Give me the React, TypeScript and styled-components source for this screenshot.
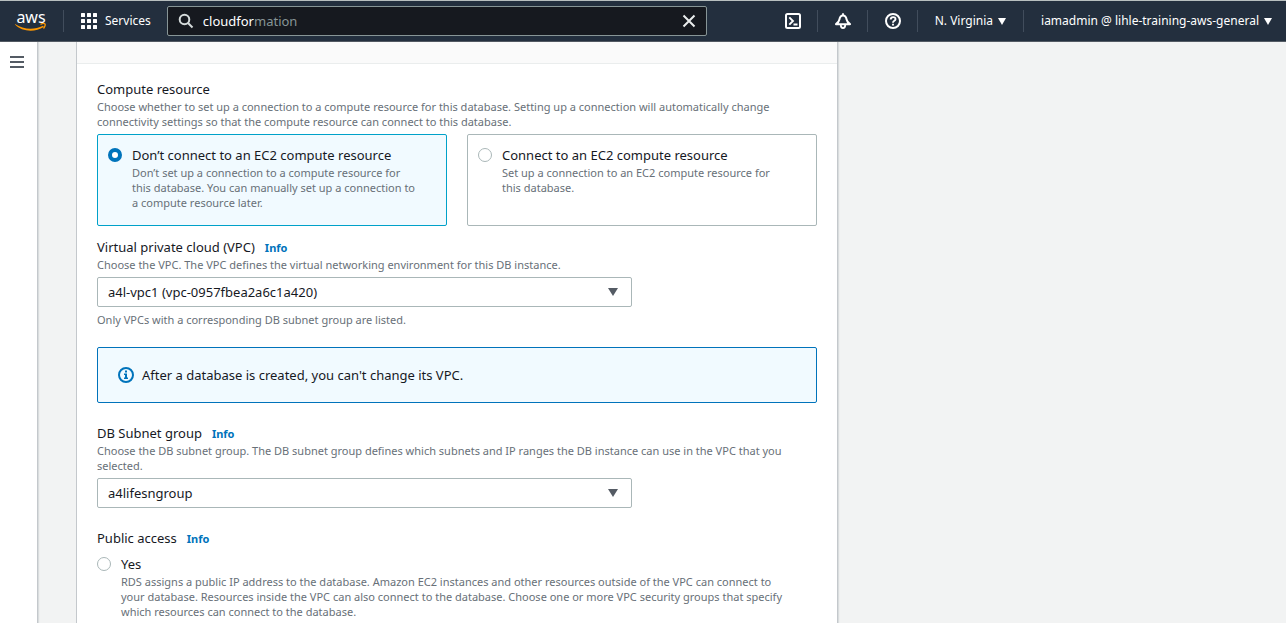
import React, { useState } from "react";
import styled, { createGlobalStyle } from "styled-components";

const GlobalStyle = createGlobalStyle`
  *, *::before, *::after { box-sizing: border-box; }
  body {
    margin: 0;
    background: #f2f3f3;
    color: #16191f;
    font-family: "Noto Sans", "Liberation Sans", sans-serif;
    font-size: 13px;
    line-height: 20px;
  }
  button, input, select { font: inherit; color: inherit; margin: 0; }
  p { margin: 0; }
`;

const Page = styled.div`
  display: flex;
  flex-direction: column;
  height: 100vh;
  overflow: hidden;
`;

const TopBar = styled.header`
  display: flex;
  align-items: center;
  flex: none;
  height: 42px;
  padding: 0 14px 0 15px;
  background: #232f3e;
  border-top: 1px solid #b8bfbf;
  border-bottom: 1px solid #545b64;
  color: #fff;
  font-size: 12px;
`;

const Logo = styled.a`
  display: flex;
  flex-direction: column;
  align-items: center;
  width: 32px;
  margin-right: 16px;
  color: #fff;
  font-size: 16px;
  line-height: 12px;
  text-decoration: none;
`;

const Divider = styled.span`
  width: 1px;
  height: 22px;
  background: #414d5c;
`;

const BarButton = styled.button`
  display: flex;
  align-items: center;
  justify-content: center;
  gap: 5px;
  padding: 0 17px;
  border: 0;
  background: none;
  white-space: nowrap;
  cursor: pointer;
`;

const ServicesButton = styled(BarButton)`
  gap: 8px;
  padding-right: 16px;
`;

const IconButton = styled(BarButton)`
  padding: 0 16px 0 17px;
`;

const AccountButton = styled(BarButton)`
  padding-right: 0;
`;

const SearchBox = styled.div`
  display: flex;
  align-items: center;
  flex: 0 1 540px;
  height: 30px;
  padding: 0 10px;
  background: #16191f;
  border: 1px solid #879596;
  border-radius: 2px;
  font-size: 13px;
`;

const SearchLabel = styled.label`
  display: flex;
  align-items: center;
  flex: 1;
`;

const SearchInput = styled.input`
  field-sizing: content;
  margin-left: 9px;
  padding: 0;
  border: 0;
  outline: 0;
  background: none;
  color: #fff;
`;

const Suggestion = styled.span`
  color: #879596;
`;

const PlainButton = styled.button`
  display: flex;
  padding: 0;
  border: 0;
  background: none;
  cursor: pointer;
`;

const BarTools = styled.div`
  display: flex;
  align-items: center;
  margin-left: auto;
`;

const Columns = styled.div`
  display: flex;
  flex: 1;
  min-height: 0;
`;

const SideRail = styled.nav`
  flex: none;
  width: 38px;
  padding: 14px 0 0 10px;
  background: #fff;
  border-right: 1px solid #c4c8cc;
  box-shadow: 1px 0 1px rgba(0, 28, 36, 0.1);
`;

const Main = styled.main`
  flex: 1;
  display: flex;
  padding-left: 38px;
`;

const Panel = styled.section`
  flex: 0 1 762px;
  background: #fff;
  border: solid #c4c8cc;
  border-width: 0 1px;
  box-shadow: 1px 0 1px rgba(0, 28, 36, 0.1);
`;

const PanelHead = styled.div`
  height: 22px;
  background: #fafafa;
  border-bottom: 1px solid #eaeded;
`;

const PanelBody = styled.form`
  display: flex;
  flex-direction: column;
  gap: 20px;
  padding: 15px 20px 0;
`;

const FieldStack = styled.div`
  display: flex;
  flex-direction: column;
  gap: 11px;
`;

const FieldTitle = styled.div`
  display: flex;
  align-items: baseline;
  gap: 10px;
`;

const InfoLink = styled.a`
  color: #0073bb;
  font-size: 11px;
  font-weight: 700;
  line-height: 15px;
  text-decoration: none;
`;

const Hint = styled.p`
  color: #687078;
  font-size: 11px;
  line-height: 15px;
`;

const Cards = styled.div`
  display: grid;
  grid-template-columns: 1fr 1fr;
  gap: 20px;
  margin-top: 5px;
`;

const Card = styled.label<{ $active: boolean }>`
  display: flex;
  gap: 10px;
  padding: 10px 28px 15px 10px;
  background: ${(p) => (p.$active ? "#f1faff" : "#fff")};
  border: 1px solid ${(p) => (p.$active ? "#00a1c9" : "#aab7b8")};
  border-radius: 2px;
`;

const RadioRow = styled.label`
  display: flex;
  gap: 10px;
  padding: 6px 28px 0 0;
`;

const Radio = styled.input`
  appearance: none;
  flex: none;
  width: 14px;
  height: 14px;
  margin-top: 3px;
  background: #fff;
  border: 1px solid #aab7b8;
  border-radius: 50%;
  &:checked {
    border: 4px solid #0073bb;
  }
`;

const SelectWrap = styled.div`
  display: flex;
  position: relative;
  width: 535px;
  max-width: 100%;
  margin-top: 5px;

  & + ${Hint} {
    margin-top: 5px;
  }
`;

const SelectBox = styled.select`
  appearance: none;
  width: 100%;
  height: 30px;
  padding: 0 30px 0 10px;
  background: #fff;
  border: 1px solid #aab7b8;
  border-radius: 2px;
`;

const SelectCaret = styled.svg`
  position: absolute;
  top: 11px;
  right: 14px;
  pointer-events: none;
`;

const Notice = styled.div`
  display: flex;
  align-items: center;
  gap: 8px;
  padding: 17px 20px;
  background: #f1faff;
  border: 1px solid #0073bb;
  border-radius: 2px;
`;

const Caret = () => (
  <svg width="8" height="7" viewBox="0 0 8 7" aria-hidden="true">
    <path d="M0 0h8L4 7z" fill="#fff" />
  </svg>
);

const iconProps = {
  width: 16,
  height: 16,
  viewBox: "0 0 16 16",
  fill: "none",
  stroke: "currentColor",
  strokeWidth: 2,
  "aria-hidden": true,
};

function Select({ id, value }: { id: string; value: string }) {
  return (
    <SelectWrap>
      <SelectBox id={id} defaultValue={value}>
        <option value={value}>{value}</option>
      </SelectBox>
      <SelectCaret width="10" height="8" viewBox="0 0 10 8" aria-hidden="true">
        <path d="M0 0h10L5 8z" fill="#545b64" />
      </SelectCaret>
    </SelectWrap>
  );
}

function Header() {
  const [query, setQuery] = useState("cloudfor");
  return (
    <TopBar>
      <Logo href="#home">
        aws
        <svg width="32" height="9" viewBox="0 0 32 9" fill="none" stroke="#ff9900" aria-hidden="true">
          <path d="M0 1c8 5.500 19 6.500 28 1.800l.8 1.200C20 9.500 7 9 0 1.500z" fill="#ff9900" stroke="none" />
          <path d="M25.500 1.300c2-.9 4-.8 4.500-.3s0 2.800-1.500 4.500" strokeWidth="1.300" />
        </svg>
      </Logo>
      <Divider />
      <ServicesButton>
        <svg width="16" height="16" viewBox="0 0 16 16" fill="#fff" aria-hidden="true">
          {[0, 6, 12].map((y) =>
            [0, 6, 12].map((x) => <rect key={`${x}-${y}`} x={x} y={y} width="4" height="4" rx="0.500" />)
          )}
        </svg>
        Services
      </ServicesButton>
      <SearchBox>
        <SearchLabel>
          <svg {...iconProps} stroke="#d5dbdb">
            <circle cx="6.500" cy="6.500" r="4.800" />
            <path d="M10 10l4.500 4.500" />
          </svg>
          <SearchInput aria-label="Search" value={query} onChange={(e) => setQuery(e.target.value)} />
          {query === "cloudfor" && <Suggestion>mation</Suggestion>}
        </SearchLabel>
        <PlainButton type="button" aria-label="Clear search" onClick={() => setQuery("")}>
          <svg width="14" height="14" viewBox="0 0 14 14" fill="none" stroke="#eaeded" strokeWidth="2" aria-hidden="true">
            <path d="M1.500 1.500l11 11M12.500 1.500l-11 11" />
          </svg>
        </PlainButton>
      </SearchBox>
      <BarTools>
        <IconButton aria-label="CloudShell">
          <svg {...iconProps}>
            <rect x="1" y="1" width="14" height="14" rx="1.500" />
            <path d="M4.300 4.300L8 8l-3.700 3.700M8.500 11.500h4" strokeWidth="1.900" />
          </svg>
        </IconButton>
        <Divider />
        <IconButton aria-label="Notifications">
          <svg {...iconProps} strokeLinejoin="round">
            <path d="M1 11.200C3.500 9.500 4 8.500 4.400 6.500 4.900 3.700 6 2.500 8 2.500s3.100 1.200 3.600 4c.4 2 .9 3 3.400 4.700z" />
            <path d="M8 .2v2M5.800 12c0 4 4.400 4 4.400 0" strokeWidth="1.800" />
          </svg>
        </IconButton>
        <Divider />
        <IconButton aria-label="Help">
          <svg {...iconProps}>
            <circle cx="8" cy="8" r="7" />
            <path d="M5.700 6.500C5.700 3.300 10.500 3.400 10.500 6.200 10.500 7.800 8 7.700 8 9.700M8 10.700v1.800" strokeWidth="1.900" />
          </svg>
        </IconButton>
        <Divider />
        <BarButton>
          N. Virginia
          <Caret />
        </BarButton>
        <Divider />
        <AccountButton>
          iamadmin @ lihle-training-aws-general
          <Caret />
        </AccountButton>
      </BarTools>
    </TopBar>
  );
}

export default function App() {
  const [connect, setConnect] = useState(false);
  return (
    <Page>
      <GlobalStyle />
      <Header />
      <Columns>
        <SideRail>
          <PlainButton aria-label="Open navigation">
            <svg width="14" height="12" viewBox="0 0 14 12" fill="#545b64" aria-hidden="true">
              <path d="M0 0h14v2H0zM0 5h14v2H0zM0 10h14v2H0z" />
            </svg>
          </PlainButton>
        </SideRail>
        <Main>
          <Panel>
            <PanelHead />
            <PanelBody>
              <FieldStack>
                <div role="radiogroup" aria-labelledby="compute-title">
                  <FieldTitle id="compute-title">Compute resource</FieldTitle>
                  <Hint>
                    Choose whether to set up a connection to a compute resource for this database. Setting up a
                    connection will automatically change connectivity settings so that the compute resource can
                    connect to this database.
                  </Hint>
                  <Cards>
                    <Card $active={!connect}>
                      <Radio type="radio" name="compute" checked={!connect} onChange={() => setConnect(false)} />
                      <div>
                        Don’t connect to an EC2 compute resource
                        <Hint>
                          Don’t set up a connection to a compute resource for this database. You can manually set up a
                          connection to a compute resource later.
                        </Hint>
                      </div>
                    </Card>
                    <Card $active={connect}>
                      <Radio type="radio" name="compute" checked={connect} onChange={() => setConnect(true)} />
                      <div>
                        Connect to an EC2 compute resource
                        <Hint>Set up a connection to an EC2 compute resource for this database.</Hint>
                      </div>
                    </Card>
                  </Cards>
                </div>
                <div>
                  <FieldTitle>
                    <label htmlFor="vpc">Virtual private cloud (VPC)</label>
                    <InfoLink href="#vpc-info">Info</InfoLink>
                  </FieldTitle>
                  <Hint>Choose the VPC. The VPC defines the virtual networking environment for this DB instance.</Hint>
                  <Select id="vpc" value="a4l-vpc1 (vpc-0957fbea2a6c1a420)" />
                  <Hint>Only VPCs with a corresponding DB subnet group are listed.</Hint>
                </div>
              </FieldStack>
              <Notice>
                <svg {...iconProps} stroke="#0073bb">
                  <circle cx="8" cy="8" r="7" />
                  <path d="M7 3.500h2v2H7zM6 6.500h3v4h1V12H6v-1.500h1V8H6z" fill="#0073bb" stroke="none" />
                </svg>
                After a database is created, you can't change its VPC.
              </Notice>
              <div>
                <FieldTitle>
                  <label htmlFor="subnet">DB Subnet group</label>
                  <InfoLink href="#subnet-info">Info</InfoLink>
                </FieldTitle>
                <Hint>
                  Choose the DB subnet group. The DB subnet group defines which subnets and IP ranges the DB instance
                  can use in the VPC that you selected.
                </Hint>
                <Select id="subnet" value="a4lifesngroup" />
              </div>
              <div role="radiogroup" aria-labelledby="public-title">
                <FieldTitle>
                  <span id="public-title">Public access</span>
                  <InfoLink href="#public-info">Info</InfoLink>
                </FieldTitle>
                <RadioRow>
                  <Radio type="radio" name="public" value="yes" />
                  <div>
                    Yes
                    <Hint>
                      RDS assigns a public IP address to the database. Amazon EC2 instances and other resources outside
                      of the VPC can connect to your database. Resources inside the VPC can also connect to the
                      database. Choose one or more VPC security groups that specify which resources can connect to the
                      database.
                    </Hint>
                  </div>
                </RadioRow>
              </div>
            </PanelBody>
          </Panel>
        </Main>
      </Columns>
    </Page>
  );
}
